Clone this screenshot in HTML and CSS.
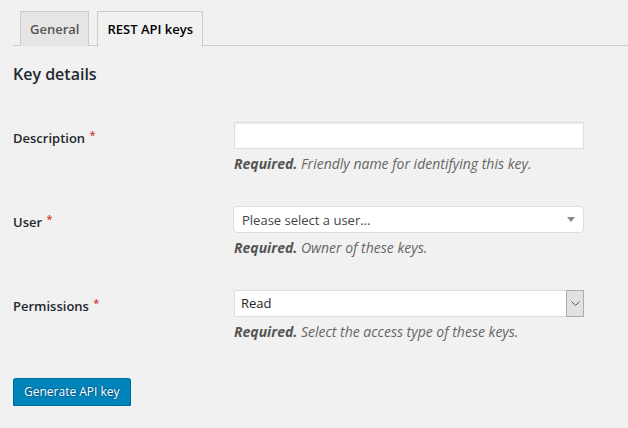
FILE: index.html
```html
<!DOCTYPE html>
<html>
<head>
<meta charset="utf-8">
<link rel="stylesheet" href="styles.css">
</head>
<body>
<div class="wrap">
  <nav class="tabs">
    <a class="tab">General</a>
    <a class="tab active">REST API keys</a>
  </nav>
  <h2 class="heading">Key details</h2>
  <div class="form">
    <div class="row">
      <div class="label">Description <span class="req">*</span></div>
      <div class="field">
        <div class="input"></div>
        <p class="help"><b>Required.</b> Friendly name for identifying this key.</p>
      </div>
    </div>
    <div class="row">
      <div class="label">User <span class="req">*</span></div>
      <div class="field">
        <div class="select2"><span>Please select a user...</span><span class="tri"></span></div>
        <p class="help"><b>Required.</b> Owner of these keys.</p>
      </div>
    </div>
    <div class="row">
      <div class="label">Permissions <span class="req">*</span></div>
      <div class="field">
        <div class="native"><span class="val">Read</span><span class="btn"><svg width="9" height="5" viewBox="0 0 9 5"><path d="M0.5 0.5 L4.5 4.5 L8.5 0.5" fill="none" stroke="#555" stroke-width="1"/></svg></span></div>
        <p class="help"><b>Required.</b> Select the access type of these keys.</p>
      </div>
    </div>
  </div>
  <div class="submit"><button class="button">Generate API key</button></div>
</div>
</body>
</html>
```
FILE: styles.css
```css
html, body { margin: 0; padding: 0; }
body {
  background: #f1f1f1;
  font-family: "Open Sans", "Noto Sans", sans-serif;
  color: #23282d;
  font-size: 13px;
}
.wrap { padding: 0 0 0 13px; }
.tabs {
  display: flex;
  gap: 8px;
  padding: 11px 0 0 7px;
  border-bottom: 1px solid #ccc;
  height: 34px;
  box-sizing: content-box;
}
.tab {
  display: block;
  padding: 5px 9px;
  height: 24px;
  line-height: 24px;
  font-size: 13px;
  font-weight: 600;
  color: #555;
  background: #e5e5e5;
  border: 1px solid #ccc;
  border-bottom: none;
}
.tab.active {
  background: #f1f1f1;
  color: #000;
  margin-bottom: -1px;
  height: 25px;
}
.heading {
  margin: 17px 0 0;
  font-size: 16px;
  font-weight: 600;
  line-height: 22px;
  color: #23282d;
}
.form { margin-top: 22px; }
.row {
  display: flex;
  padding: 15px 0 17px;
}
.label {
  width: 221px;
  flex: none;
  font-size: 13px;
  font-weight: 600;
  line-height: 20px;
  padding-top: 6px;
  color: #23282d;
}
.req {
  color: #dc3232;
  font-size: 11px;
  vertical-align: top;
  position: relative;
  top: -3px;
  margin-left: 1px;
}
.field { width: 350px; }
.input {
  height: 27px;
  box-sizing: border-box;
  background: #fff;
  border: 1px solid #ddd;
  box-shadow: inset 0 1px 2px rgba(0,0,0,.07);
}
.select2 {
  height: 27px;
  box-sizing: border-box;
  background: #fff;
  border: 1px solid #ddd;
  border-radius: 4px;
  display: flex;
  align-items: center;
  justify-content: space-between;
  padding: 0 8px 0 8px;
  color: #444;
  font-size: 13px;
  margin-left: -1px;
}
.tri {
  width: 0; height: 0;
  border-left: 4px solid transparent;
  border-right: 4px solid transparent;
  border-top: 5px solid #888;
}
.native {
  height: 27px;
  box-sizing: border-box;
  background: #fff;
  border: 1px solid #ddd;
  display: flex;
  align-items: stretch;
  color: #222;
  font-size: 13px;
}
.native .val { flex: 1; padding-left: 6px; line-height: 25px; }
.native .btn {
  width: 16px;
  background: #e1e1e1;
  border: 1px solid #adadad;
  margin: -1px -1px -1px 0;
  display: flex;
  align-items: center;
  justify-content: center;
}
.help {
  margin: 5px 0 0;
  line-height: 20px;
  font-size: 14px;
  font-style: italic;
  color: #666;
}
.help b { font-weight: 700; color: #555; }
.submit { margin-top: 19px; }
.button {
  height: 28px;
  padding: 0 10px 1px;
  font-family: inherit;
  font-size: 12px;
  line-height: 26px;
  color: #fff;
  background: #0085ba;
  border: 1px solid;
  border-color: #0073aa #006799 #006799;
  border-radius: 3px;
  box-shadow: 0 1px 0 #006799;
  text-shadow: 0 -1px 1px #006799, 1px 0 1px #006799, 0 1px 1px #006799, -1px 0 1px #006799;
}
```
